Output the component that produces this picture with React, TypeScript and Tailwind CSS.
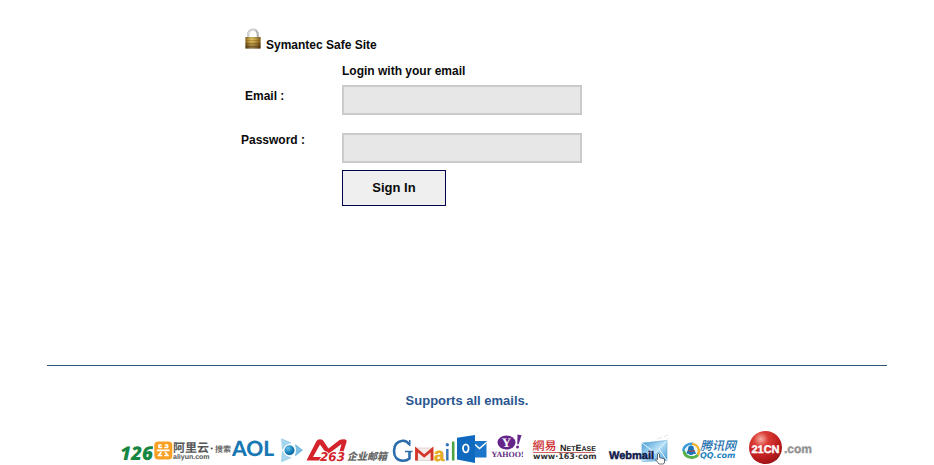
import type { ReactNode } from "react";

const SANS = "'Liberation Sans', Arial, sans-serif";
const CJK = "'Noto Sans CJK SC', sans-serif";
const SERIF = "'Liberation Serif', serif";

function Logo({ label, width, children }: { label: string; width: number; children: ReactNode }) {
  return (
    <svg
      role="img"
      aria-label={label}
      width={width}
      height={36}
      viewBox={`0 0 ${width} 36`}
      className="shrink-0"
      fontFamily={SANS}
      textRendering="geometricPrecision"
    >
      {children}
    </svg>
  );
}

function Padlock() {
  return (
    <svg width="16" height="22" viewBox="0 0 16 22" aria-hidden="true" className="shrink-0">
      <defs>
        <linearGradient id="brass" x1="0" y1="0" x2="0" y2="1">
          <stop offset="0" stopColor="#a58a3c" />
          <stop offset="0.3" stopColor="#dcae3c" />
          <stop offset="0.6" stopColor="#95701c" />
          <stop offset="1" stopColor="#4a2c08" />
        </linearGradient>
        <linearGradient id="brassSide" x1="0" y1="0" x2="1" y2="0">
          <stop offset="0" stopColor="#3d2100" stopOpacity="0.5" />
          <stop offset="0.4" stopColor="#fff0a0" stopOpacity="0.3" />
          <stop offset="1" stopColor="#3d2100" stopOpacity="0.6" />
        </linearGradient>
      </defs>
      <path d="M3.200 11V6.500a4.800 5 0 0 1 9.600 0V11" fill="none" stroke="#b4b4b4" strokeWidth="2.200" />
      <path d="M3 10V6.500a5 5 0 0 1 8-4" fill="none" stroke="#e4e4e4" strokeWidth="1" />
      <rect x="0.500" y="9" width="15" height="11.500" rx="0.500" fill="url(#brass)" />
      <rect x="0.500" y="9" width="15" height="11.500" rx="0.500" fill="url(#brassSide)" />
      <path d="M1 12.500h14M1 15.500h14M1 18.500h14" stroke="#4a2c08" strokeOpacity="0.35" strokeWidth="0.800" />
    </svg>
  );
}

function ProviderLogos() {
  return (
    <div className="flex justify-center">
      <Logo label="126" width={33}>
        <text x="0" y="30" fontSize="19" fontWeight="800" fontStyle="italic" fontFamily="'Open Sans', sans-serif" fill="#168642">126</text>
      </Logo>

      <Logo label="Aliyun" width={79}>
        <rect x="1.300" y="11.500" width="18" height="18" rx="4" fill="#f7a024" />
        <g fill="none" stroke="#fff" strokeLinecap="round" strokeLinejoin="round">
          <path d="M8 15h-2v2.500h2.500M12.500 15h2v2.500h-2.500M4.500 20.300h11.500" strokeWidth="1.700" />
          <path d="M8 22.500L5.500 25.500h3M12.500 22.500l2.500 3h-3" strokeWidth="1.700" />
        </g>
        <text x="20" y="22" fontSize="12" fontWeight="700" fontFamily={CJK} fill="#555">阿里云</text>
        <text x="20" y="29" fontSize="7" fontWeight="700" fill="#555">aliyun.com</text>
        <circle cx="58.700" cy="18.500" r="1.100" fill="#555" />
        <text x="62" y="22" fontSize="8" fontWeight="700" fontFamily={CJK} fill="#666">搜索</text>
      </Logo>

      <Logo label="AOL" width={71}>
        <defs>
          <radialGradient id="aolBall" cx="0.35" cy="0.3" r="0.8">
            <stop offset="0" stopColor="#6cc3ea" />
            <stop offset="0.6" stopColor="#167fb9" />
            <stop offset="1" stopColor="#0c5d92" />
          </radialGradient>
        </defs>
        <text x="0" y="26" fontSize="21" fontWeight="900" fontFamily="Lato, sans-serif" fill="#1878b4">AOL</text>
        <path d="M49.500 8.800l9.500 4q-6.500 1-8.500 6.700z" fill="#a8d6ee" stroke="#86c4e4" strokeWidth="0.600" />
        <path d="M49.500 31.700l9.500-4q-6.500-1-8.500-6.700z" fill="#a8d6ee" stroke="#86c4e4" strokeWidth="0.600" />
        <path d="M63.500 14.800l6.800 5.400-6.800 5.400q2.500-5.400 0-10.800z" fill="#7fc2e6" stroke="#4fa3d2" strokeWidth="0.700" />
        <circle cx="57.500" cy="20.200" r="5" fill="url(#aolBall)" />
      </Logo>

      <Logo label="263" width={86}>
        <path
          d="M3.500 30.500L13.500 11Q14.500 9.300 17 9.300 19.500 9.300 20.500 11L25.500 18.500 36.500 10Q38 9.300 41 9.300 44 9.300 43.500 12L40.500 21.500H36.500L38.500 14 26 23.500H23.500L17 14.500 10 27H18L17 30.500z"
          fill="#d4232b"
        />
        <text x="17" y="30.500" fontSize="12" fontWeight="700" fontStyle="italic" fontFamily="'DejaVu Sans', sans-serif" fill="#d4232b" stroke="#fff" strokeWidth="1.500" paintOrder="stroke">263</text>
        <text x="44" y="30" fontSize="10" fontWeight="900" fontStyle="italic" fontFamily={CJK} fill="#686868">企业邮箱</text>
      </Logo>

      <Logo label="Gmail" width={68}>
        <path
          d="M20.500 14.500Q17.500 10.500 13.500 10.800C8 11.500 5 15.500 5 21S8 30.700 14 30.700Q18 30.700 20.500 28.500V21.500"
          fill="none"
          stroke="#2b6cab"
          strokeWidth="2.600"
        />
        <path d="M20.700 10v6M16 21.500h7.500" stroke="#2b6cab" strokeWidth="1.500" />
        <rect x="26.500" y="18" width="17.500" height="12.500" fill="#f4ecea" stroke="#c9b8b4" strokeWidth="0.500" />
        <path d="M27.500 30.500V19.500L35.200 26 43 19.500V30.500" fill="none" stroke="#d33529" strokeWidth="2.800" />
        <text x="45" y="30.500" fontSize="19" fill="#e5ac22" stroke="#e5ac22" strokeWidth="0.500">a</text>
        <path d="M58.300 19v11.500" stroke="#3878b7" strokeWidth="2.500" />
        <circle cx="58.300" cy="14.800" r="1.700" fill="#3878b7" />
        <path d="M64.200 11.500v19" stroke="#4ba346" strokeWidth="2.600" />
      </Logo>

      <Logo label="Outlook" width={32}>
        <rect x="17" y="11" width="12.500" height="16.500" fill="#1b76ca" />
        <path d="M18 14.500l4.500 4 7-6" fill="none" stroke="#fff" strokeWidth="1.500" />
        <path d="M0 7.800L18 5v28L0 29.500z" fill="#0f6abf" />
        <ellipse cx="8.800" cy="18.300" rx="2.800" ry="4" fill="none" stroke="#fff" strokeWidth="1.800" />
      </Logo>

      <Logo label="Yahoo" width={40}>
        <ellipse cx="17.500" cy="12.500" rx="9" ry="7" fill="#66258a" />
        <text x="17.500" y="17" fontSize="13" fontWeight="700" fontFamily={SERIF} textAnchor="middle" fill="#fff">Y</text>
        <path d="M28.500 4.500l4 .800-2.800 9h-1.400z" fill="#66258a" />
        <circle cx="28.500" cy="17" r="1.500" fill="#66258a" />
        <text x="2.500" y="26.500" fontSize="8" fontWeight="700" fontFamily={SERIF} fill="#5f2a80">YAHOO!</text>
      </Logo>

      <Logo label="NetEase 163" width={72}>
        <text x="3.500" y="19.500" fontSize="12" fontWeight="500" fontFamily="'Noto Sans CJK TC', sans-serif" fill="#cc2a2e">網易</text>
        <text x="31" y="21" fontSize="9" fontWeight="700" fill="#222">
          N<tspan fontSize="7">ET</tspan>E<tspan fontSize="7">ASE</tspan>
        </text>
        <path d="M4 22.500h61.500" stroke="#bf3b3b" strokeWidth="0.800" />
        <text x="4" y="29" fontSize="8" fontWeight="700" fontFamily="'DejaVu Sans', sans-serif" fill="#333">www·163·com</text>
      </Logo>

      <Logo label="Webmail" width={73}>
        <defs>
          <linearGradient id="envelope" x1="0" y1="0" x2="1" y2="1">
            <stop offset="0" stopColor="#3f94d3" />
            <stop offset="0.5" stopColor="#b6e0f6" />
            <stop offset="1" stopColor="#4a9bd6" />
          </linearGradient>
        </defs>
        <path d="M41 13l25-2.500v20l-25 1z" fill="url(#envelope)" stroke="#5da4d6" strokeWidth="0.600" />
        <path d="M41 13l13.500 10L66 10.500M41 31.500l9.500-11.500M66 30.500l-8-11.500" fill="none" stroke="#e8f7ff" strokeWidth="1" />
        <path d="M56 9l5-2M63 6.500l4-1.500M66 9l1.500-1" stroke="#d5dadd" strokeWidth="0.700" />
        <text x="8" y="28.500" fontSize="11" fontWeight="700" fill="#101b4c" stroke="#101b4c" strokeWidth="0.500">Webmail</text>
        <path
          d="M56.500 24q1.500-1.500 2 .500v3l5 1.500v3q0 2-1.500 2h-4l-3.500-4.500q.500-1 2 0z"
          fill="#fff"
          stroke="#333"
          strokeWidth="0.700"
        />
      </Logo>

      <Logo label="QQ" width={70}>
        <path d="M9.500 21a8 7 0 0 1 10-7" fill="none" stroke="#3b9ed8" strokeWidth="2.600" />
        <path d="M18 14a7.500 7.500 0 0 1 6 11" fill="none" stroke="#f3b52b" strokeWidth="2.600" />
        <path d="M10 21a8 7 0 0 0 14 4" fill="none" stroke="#55b047" strokeWidth="3" />
        <ellipse cx="17.500" cy="20.500" rx="6" ry="5.500" fill="#e9f5fc" />
        <path d="M17 15.500q3 0 3 4l2 4q-1 1-2 0-3 3-6 0-1.500 1-1.500-.500l1.500-3.500q0-4 3-4z" fill="#1b73b8" />
        <path d="M14.500 20.500q3 1.500 6 0" fill="none" stroke="#d93832" strokeWidth="1.200" />
        <text x="26" y="20" fontSize="12" fontWeight="500" fontStyle="italic" fontFamily={CJK} fill="#216fae">腾讯网</text>
        <text x="26" y="28" fontSize="8" fontWeight="700" fontStyle="italic" fontFamily="'DejaVu Sans', sans-serif" fill="#2583c2">QQ.com</text>
      </Logo>

      <Logo label="21CN" width={70}>
        <defs>
          <radialGradient id="redBall" cx="0.36" cy="0.25" r="0.75">
            <stop offset="0" stopColor="#f6b0a5" />
            <stop offset="0.3" stopColor="#da3c34" />
            <stop offset="0.75" stopColor="#bd1d1d" />
            <stop offset="1" stopColor="#a01518" />
          </radialGradient>
        </defs>
        <circle cx="21.500" cy="17.500" r="16.500" fill="url(#redBall)" />
        <text x="21.500" y="22.500" fontSize="11" fontWeight="700" textAnchor="middle" fill="#fff" stroke="#fff" strokeWidth="0.400">21CN</text>
        <text x="40" y="23" fontSize="12" fontWeight="700" fill="#929292" stroke="#929292" strokeWidth="0.400">.com</text>
      </Logo>
    </div>
  );
}

const fieldClass =
  "block h-[30px] w-full border-2 border-[#cbcbcb] bg-[#e7e7e7] px-2 text-sm outline-none focus:border-[#8f8fb0]";

export default function App() {
  return (
    <div className="overflow-x-hidden bg-white pt-7 font-['Liberation_Sans',Arial,sans-serif] text-xs font-bold text-[#0a0a0a]">
      <main>
        <form className="mx-auto w-[452px] max-w-full" onSubmit={(event) => event.preventDefault()}>
          <div className="flex items-end gap-[5px] pl-1">
            <Padlock />
            <h1 className="leading-[10px]">Symantec Safe Site</h1>
          </div>

          <div className="mt-3 grid grid-cols-[101px_240px]">
            <p className="col-start-2 mb-[5px] leading-[18px]">Login with your email</p>

            <label htmlFor="email" className="pt-[3px] pl-1 leading-4">Email :</label>
            <input id="email" type="email" className={fieldClass} />

            <label htmlFor="password" className="pt-[17px] leading-4">Password :</label>
            <input id="password" type="password" className={`${fieldClass} mt-[18px]`} />

            <button
              type="submit"
              className="col-start-2 mt-[7px] h-9 w-[104px] border border-[#00004b] bg-[#efefef] text-[13px]"
            >
              Sign In
            </button>
          </div>
        </form>
      </main>

      <footer className="mt-[159px]">
        <hr className="mx-[5%] h-px border-0 bg-[#2b5578]" />
        <p className="mt-[25px] mb-[19px] text-center text-[13px] leading-5 text-[#2a5590]">Supports all emails.</p>
        <ProviderLogos />
      </footer>
    </div>
  );
}
